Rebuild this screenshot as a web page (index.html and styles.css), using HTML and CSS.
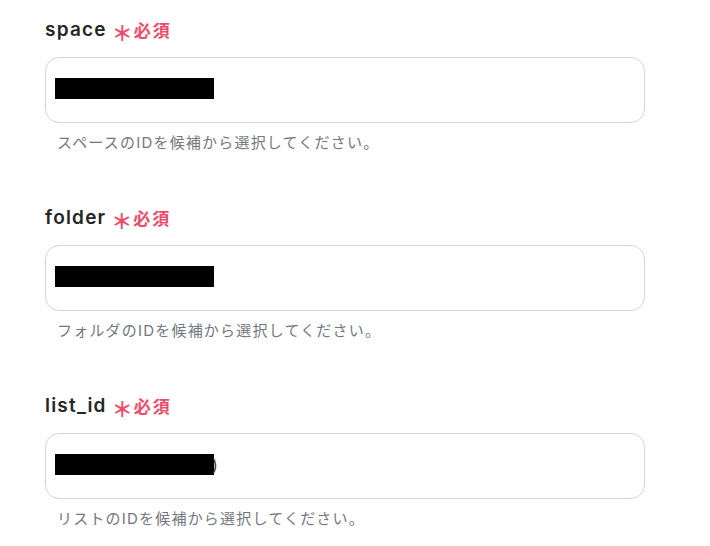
FILE: index.html
```html
<!DOCTYPE html>
<html lang="ja">
<head>
<meta charset="utf-8">
<link rel="stylesheet" href="styles.css">
</head>
<body>
<div class="form">
  <div class="field">
    <div class="label"><span class="name">space</span><span class="req">＊</span><span class="req-text">必須</span></div>
    <div class="input"><span class="redact"></span></div>
    <div class="help">スペースのIDを候補から選択してください。</div>
  </div>
  <div class="field">
    <div class="label"><span class="name">folder</span><span class="req">＊</span><span class="req-text">必須</span></div>
    <div class="input"><span class="redact"></span></div>
    <div class="help">フォルダのIDを候補から選択してください。</div>
  </div>
  <div class="field">
    <div class="label"><span class="name">list_id</span><span class="req">＊</span><span class="req-text">必須</span></div>
    <div class="input"><span class="redact"></span><span class="tail">)</span></div>
    <div class="help">リストのIDを候補から選択してください。</div>
  </div>
</div>
</body>
</html>
```

FILE: styles.css
```css
html, body {
  margin: 0;
  padding: 0;
  background: #ffffff;
}
body {
  font-family: Inter, "Noto Sans CJK JP", sans-serif;
  color: #2b2b2b;
}
.form {
  display: flex;
  flex-direction: column;
  gap: 51px;
  padding: 15px 0 0 45px;
  width: 600px;
}
.field {
  display: flex;
  flex-direction: column;
}
.label {
  display: flex;
  align-items: center;
  height: 28px;
  margin-bottom: 14px;
}
.name {
  font-size: 19px;
  font-weight: 600;
  letter-spacing: 1.2px;
  color: #262626;
}
.req {
  color: #f04a6a;
  font-size: 21px;
  font-weight: 700;
  margin-left: 5px;
  margin-top: 5px;
}
.req-text {
  color: #f04a6a;
  font-size: 17px;
  font-weight: 700;
  letter-spacing: 2px;
  margin-left: 1px;
}
.input {
  box-sizing: border-box;
  height: 66px;
  border: 1px solid #d3d6dc;
  border-radius: 14px;
  display: flex;
  align-items: center;
  padding-left: 9px;
}
.redact {
  display: inline-block;
  width: 159px;
  height: 21px;
  background: #000;
  margin-top: -3px;
}
.tail {
  font-size: 16px;
  color: #333;
  margin-left: -2px;
  margin-top: -3px;
}
.help {
  margin-top: 8px;
  padding-left: 12px;
  font-size: 15px;
  letter-spacing: 1.2px;
  color: #737780;
}
```
